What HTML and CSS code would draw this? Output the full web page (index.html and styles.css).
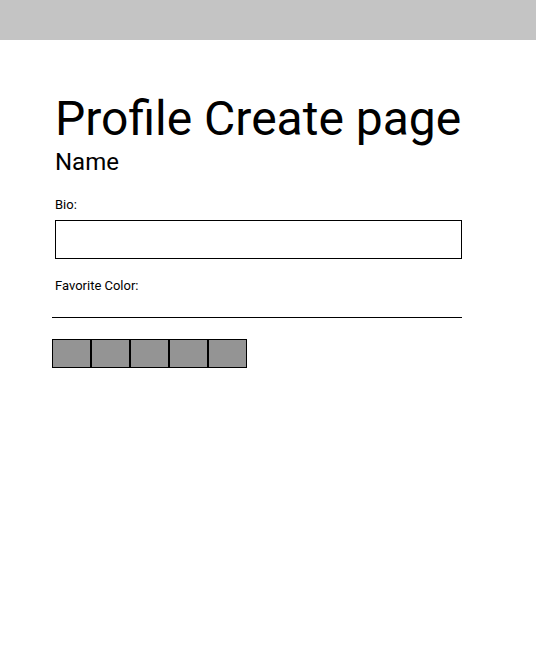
FILE: index.html
```html
<!DOCTYPE html>
<html>
<head>
<meta charset="utf-8">
<link rel="stylesheet" href="styles.css">
</head>
<body>
<div class="topbar"></div>
<main class="page">
  <h1 class="title">Profile Create page</h1>
  <div class="name">Name</div>
  <label class="label label-bio">Bio:</label>
  <div class="input"></div>
  <label class="label label-color">Favorite Color:</label>
  <div class="rule"></div>
  <div class="swatches">
    <div class="swatch"></div>
    <div class="swatch"></div>
    <div class="swatch"></div>
    <div class="swatch"></div>
    <div class="swatch"></div>
  </div>
</main>
</body>
</html>
```

FILE: styles.css
```css
* { box-sizing: border-box; }
html, body {
  margin: 0;
  padding: 0;
  background: #ffffff;
  font-family: Roboto, "Liberation Sans", sans-serif;
  color: #000000;
}
.topbar {
  height: 40px;
  background: #c4c4c4;
}
.page {
  display: flex;
  flex-direction: column;
  align-items: flex-start;
  margin-left: 52px;
  width: 410px;
}
.title {
  margin: 52px 0 0 3px;
  font-size: 48px;
  font-weight: 400;
  line-height: 54px;
}
.name {
  font-size: 24px;
  line-height: 28px;
  margin: 2px 0 0 3px;
}
.label {
  display: block;
  font-size: 13px;
  line-height: 15px;
  margin-left: 3px;
}
.label-bio { margin-top: 21px; }
.input {
  margin-top: 8px;
  margin-left: 3px;
  width: 407px;
  height: 39px;
  border: 1px solid #000000;
}
.label-color { margin-top: 19px; }
.rule {
  margin-top: 24px;
  width: 410px;
  height: 1px;
  background: #000000;
}
.swatches {
  display: flex;
  margin-top: 21px;
}
.swatch {
  width: 39px;
  height: 29px;
  background: #949494;
  border: 1px solid #000000;
}
```
